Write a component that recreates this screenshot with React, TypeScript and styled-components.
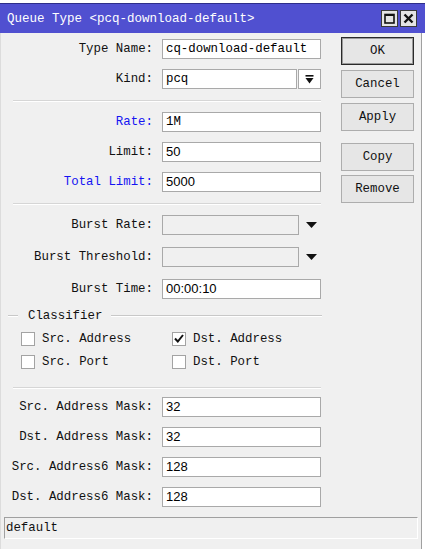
import React from 'react';
import styled, { createGlobalStyle } from 'styled-components';

const MONO = `"Liberation Mono", "Courier New", monospace`;
const SANS = `"Liberation Sans", Arial, sans-serif`;

const GlobalStyle = createGlobalStyle`
  html, body { margin: 0; padding: 0; background: #ffffff; }
  body { font-family: ${MONO}; }
  * { box-sizing: border-box; }
`;

const Window = styled.div`
  margin-top: 3px;
  width: 425px;
  height: 546px;
  display: flex;
  flex-direction: column;
`;

const TitleBar = styled.div`
  height: 30px;
  border-top: 1px solid #2e2e8a;
  background: #5050d0;
  display: flex;
  align-items: center;
  padding-left: 7px;
  padding-right: 8px;
`;

const TitleText = styled.div`
  flex: 1;
  color: #ffffff;
  font-family: ${MONO};
  font-size: 12.5px;
  white-space: pre;
`;

const TitleButtons = styled.div`
  display: flex;
  gap: 2px;
`;

const TitleButton = styled.div`
  width: 17px;
  height: 17px;
  background: #e4e4e4;
  border: 1px solid #3a3a3a;
  display: flex;
  align-items: center;
  justify-content: center;
`;

const Content = styled.div`
  flex: 1;
  width: 422px;
  background: #f0f0f0;
  border-left: 1px solid #dcdcdc;
  border-right: 1px solid #a0a0a0;
  display: flex;
  flex-direction: column;
`;

const Main = styled.div`
  display: flex;
  align-items: flex-start;
`;

const FormCol = styled.div`
  width: 321px;
  padding-top: 6px;
  display: flex;
  flex-direction: column;
`;

const Section = styled.div<{ $gap: number }>`
  display: flex;
  flex-direction: column;
  gap: ${(p) => p.$gap}px;
`;

const Row = styled.div`
  display: flex;
  align-items: center;
  height: 20px;
`;

const Label = styled.div<{ $blue?: boolean }>`
  width: 152px;
  margin-right: 9px;
  text-align: right;
  font-family: ${MONO};
  font-size: 12.4px;
  line-height: 20px;
  white-space: pre;
  color: ${(p) => (p.$blue ? '#1414f2' : '#111111')};
`;

const Field = styled.div<{ $w: number; $sans?: boolean; $disabled?: boolean }>`
  width: ${(p) => p.$w}px;
  height: 20px;
  border: 1px solid #a9a9a9;
  background: ${(p) => (p.$disabled ? '#f0f0f0' : '#ffffff')};
  padding-left: 3px;
  font-family: ${(p) => (p.$sans ? SANS : MONO)};
  font-size: ${(p) => (p.$sans ? '13px' : '12.4px')};
  line-height: 18px;
  color: #000;
  white-space: pre;
  overflow: hidden;
`;

const DropButton = styled.div`
  width: 23px;
  height: 20px;
  margin-left: 1px;
  border: 1px solid #a9a9a9;
  background: #ffffff;
  display: flex;
  align-items: center;
  justify-content: center;
`;

const ArrowWrap = styled.div`
  margin-left: 7px;
  display: flex;
  align-items: center;
`;

const Separator = styled.div<{ $top: number; $bottom: number }>`
  margin: ${(p) => p.$top}px 0 ${(p) => p.$bottom}px 12px;
  width: 308px;
  height: 2px;
  border-top: 1px solid #d6d6d6;
  border-bottom: 1px solid #ffffff;
`;

const Legend = styled.div`
  margin-top: 10px;
  height: 14px;
  display: flex;
  align-items: center;
  padding-left: 7px;
`;

const LegendLine = styled.div<{ $w?: number }>`
  ${(p) => (p.$w ? `width: ${p.$w}px;` : 'flex: 1;')}
  height: 2px;
  border-top: 1px solid #c8c8c8;
  border-bottom: 1px solid #ffffff;
`;

const LegendText = styled.div`
  margin: 0 9px 0 10px;
  font-family: ${MONO};
  font-size: 12.4px;
  color: #111;
  white-space: pre;
`;

const CheckGrid = styled.div`
  margin-top: 9px;
  padding-left: 20px;
  display: grid;
  grid-template-columns: 151px 150px;
  row-gap: 10px;
`;

const CheckItem = styled.div`
  display: flex;
  align-items: center;
  height: 13px;
`;

const Box = styled.div`
  width: 14px;
  height: 14px;
  border: 1px solid #a3a3a3;
  background: #ffffff;
  display: flex;
  align-items: center;
  justify-content: center;
`;

const CheckLabel = styled.div`
  margin-left: 7px;
  font-family: ${MONO};
  font-size: 12.4px;
  color: #111;
  white-space: pre;
`;

const ButtonCol = styled.div`
  margin-left: 19px;
  padding-top: 4px;
  width: 73px;
  display: flex;
  flex-direction: column;
`;

const Button = styled.div<{ $top: number; $default?: boolean }>`
  margin-top: ${(p) => p.$top}px;
  height: 28px;
  border: 1px solid ${(p) => (p.$default ? '#2a2a2a' : '#adadad')};
  box-shadow: ${(p) => (p.$default ? 'inset 0 0 0 1px #9a9a9a' : 'none')};
  background: #e6e6e6;
  display: flex;
  align-items: center;
  justify-content: center;
  font-family: ${MONO};
  font-size: 12.4px;
  color: #111;
`;

const StatusBar = styled.div`
  margin: 10px 3px 0 3px;
  height: 22px;
  border-top: 1px solid #a0a0a0;
  border-left: 1px solid #a0a0a0;
  border-bottom: 1px solid #ffffff;
  border-right: 1px solid #ffffff;
  padding-left: 1px;
  font-family: ${MONO};
  font-size: 12.4px;
  line-height: 20px;
  color: #111;
`;

const KindIcon = () => (
  <svg width="9" height="9" viewBox="0 0 9 9">
    <rect x="0.5" y="0" width="8" height="1.6" fill="#111" />
    <polygon points="0.5,3 8.5,3 4.5,8.5" fill="#111" />
  </svg>
);

const DownTriangle = () => (
  <svg width="11" height="6" viewBox="0 0 11 6">
    <polygon points="0,0 11,0 5.5,6" fill="#111" />
  </svg>
);

const CheckMark = () => (
  <svg width="10" height="9" viewBox="0 0 10 9">
    <polyline points="1,4.5 3.8,7.5 9,1" fill="none" stroke="#111" strokeWidth="2" />
  </svg>
);

const MaxIcon = () => (
  <svg width="11" height="11" viewBox="0 0 11 11">
    <rect x="1" y="1.5" width="9" height="8.5" fill="none" stroke="#111" strokeWidth="1.6" />
    <rect x="1" y="1" width="9" height="2" fill="#111" />
  </svg>
);

const CloseIcon = () => (
  <svg width="11" height="11" viewBox="0 0 11 11">
    <path d="M1.5 1.5 L9.5 9.5 M9.5 1.5 L1.5 9.5" stroke="#111" strokeWidth="2.4" />
  </svg>
);

type FieldRow = { label: string; value: string; blue?: boolean; sans?: boolean };

const masks: FieldRow[] = [
  { label: 'Src. Address Mask:', value: '32', sans: true },
  { label: 'Dst. Address Mask:', value: '32', sans: true },
  { label: 'Src. Address6 Mask:', value: '128', sans: true },
  { label: 'Dst. Address6 Mask:', value: '128', sans: true },
];

const rates: FieldRow[] = [
  { label: 'Rate:', value: '1M', blue: true },
  { label: 'Limit:', value: '50', sans: true },
  { label: 'Total Limit:', value: '5000', blue: true, sans: true },
];

const checks = [
  { label: 'Src. Address', checked: false },
  { label: 'Dst. Address', checked: true },
  { label: 'Src. Port', checked: false },
  { label: 'Dst. Port', checked: false },
];

export default function App() {
  return (
    <>
      <GlobalStyle />
      <Window>
        <TitleBar>
          <TitleText>{'Queue Type <pcq-download-default>'}</TitleText>
          <TitleButtons>
            <TitleButton>
              <MaxIcon />
            </TitleButton>
            <TitleButton>
              <CloseIcon />
            </TitleButton>
          </TitleButtons>
        </TitleBar>
        <Content>
          <Main>
            <FormCol>
              <Section $gap={10}>
                <Row>
                  <Label>Type Name:</Label>
                  <Field $w={159}>cq-download-default</Field>
                </Row>
                <Row>
                  <Label>Kind:</Label>
                  <Field $w={135}>pcq</Field>
                  <DropButton>
                    <KindIcon />
                  </DropButton>
                </Row>
              </Section>
              <Separator $top={11} $bottom={10} />
              <Section $gap={10}>
                {rates.map((r) => (
                  <Row key={r.label}>
                    <Label $blue={r.blue}>{r.label}</Label>
                    <Field $w={159} $sans={r.sans}>
                      {r.value}
                    </Field>
                  </Row>
                ))}
              </Section>
              <Separator $top={11} $bottom={10} />
              <Section $gap={12}>
                <Row>
                  <Label>Burst Rate:</Label>
                  <Field $w={137} $disabled />
                  <ArrowWrap>
                    <DownTriangle />
                  </ArrowWrap>
                </Row>
                <Row>
                  <Label>Burst Threshold:</Label>
                  <Field $w={137} $disabled />
                  <ArrowWrap>
                    <DownTriangle />
                  </ArrowWrap>
                </Row>
                <Row>
                  <Label>Burst Time:</Label>
                  <Field $w={159} $sans>
                    00:00:10
                  </Field>
                </Row>
              </Section>
              <Legend>
                <LegendLine $w={10} />
                <LegendText>Classifier</LegendText>
                <LegendLine />
              </Legend>
              <CheckGrid>
                {checks.map((c) => (
                  <CheckItem key={c.label}>
                    <Box>{c.checked && <CheckMark />}</Box>
                    <CheckLabel>{c.label}</CheckLabel>
                  </CheckItem>
                ))}
              </CheckGrid>
              <Separator $top={19} $bottom={8} />
              <Section $gap={10}>
                {masks.map((r) => (
                  <Row key={r.label}>
                    <Label>{r.label}</Label>
                    <Field $w={159} $sans={r.sans}>
                      {r.value}
                    </Field>
                  </Row>
                ))}
              </Section>
            </FormCol>
            <ButtonCol>
              <Button $top={0} $default>
                OK
              </Button>
              <Button $top={5}>Cancel</Button>
              <Button $top={5}>Apply</Button>
              <Button $top={12}>Copy</Button>
              <Button $top={4}>Remove</Button>
            </ButtonCol>
          </Main>
          <StatusBar>default</StatusBar>
        </Content>
      </Window>
    </>
  );
}
